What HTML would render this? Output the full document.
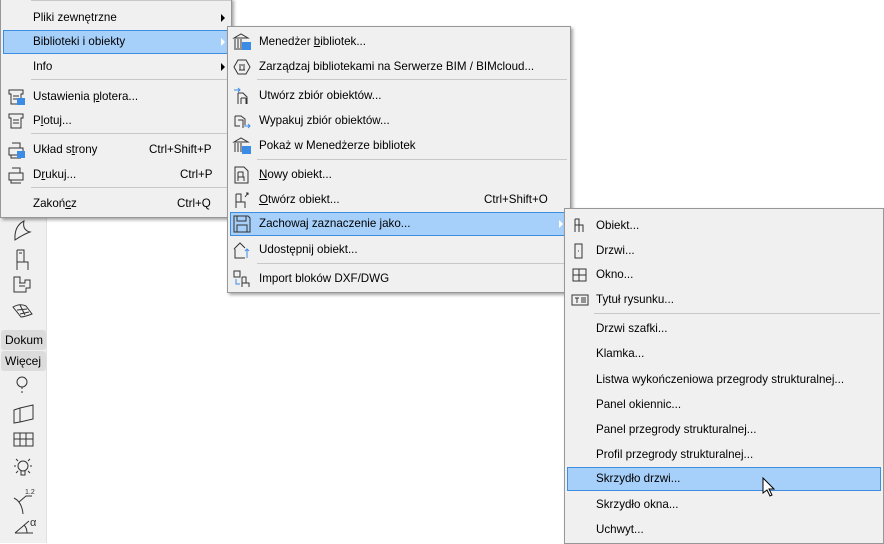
<!DOCTYPE html>
<html><head><meta charset="utf-8"><style>
*{margin:0;padding:0;box-sizing:border-box}
body{width:884px;height:543px;background:#fff;position:relative;overflow:hidden;font-family:"Liberation Sans",sans-serif;font-size:11.6px;color:#000}
.tb{position:absolute;left:0;top:0;width:47px;height:543px;background:#f0f0f0;border-right:1px solid #e0e0e0}
.m{position:absolute;background:#f0f0f0;border:1px solid #979797;box-shadow:2px 2px 3px rgba(0,0,0,.35)}
.i{position:absolute;left:2px;right:2px;height:24px;line-height:24px;white-space:nowrap}
.hl{background:#a6cffa;border:1px solid #3d8ee0;line-height:22px}
.t{position:absolute}
.k{position:absolute}
.ar{position:absolute;width:0;height:0;border-left:4px solid #000;border-top:4px solid transparent;border-bottom:4px solid transparent;top:8px}
.hl .ar{border-left-color:#fff;top:7px}
.s{position:absolute;height:1px;background:#c8c8c8}
.ic{position:absolute;top:3px}
u{text-decoration:underline}
.btn{position:absolute;left:1px;width:45px;height:20px;background:#dcdcdc;border-radius:3px;line-height:20px;padding-left:4px;font-size:12px;overflow:hidden}
svg{overflow:visible}
</style></head><body>
<div class="tb">
<svg class="k" style="left:12px;top:220px" width="22" height="300" fill="none" stroke="#333" stroke-width="1">
<path d="M3 20 Q2 6 12 1 Q10 10 18 12 Q12 14 3 20Z"/>
<path d="M5 30 h7 v12 h4 v8 M5 30 v20 M5 42 h7 M7 33 h3"/>
<path d="M2 57 h6 v6 h5 v-3 h5 v8 h-4 v4 h-12 z M7 63 h6 M7 66 h6"/>
<path d="M1 87 Q8 83 14 86 L20 94 Q12 97 9 97 Q5 92 1 87Z M5 90 L15 89 M8 94 L17 92 M8 85 L13 95"/>
<circle cx="10" cy="162" r="5"/><path d="M10 167 v8" stroke-dasharray="2 2"/>
<path d="M2 190 L8 188 L21 185 L21 199 L8 202 L2 203 Z M8 188 v14"/>
<path d="M2 213 h19 v13 h-19z M2 219 h19 M8 213 v13 M14 213 v13"/>
<circle cx="11" cy="246" r="5"/><path d="M9 251 v4 h4 v-4 M2 246 h2 M18 246 h2 M4 239 l2 2 M18 239 l-2 2 M4 253 l2-2 M18 253 l-2-2"/>
<path d="M2 278 Q10 282 11 294 M7 282 l7-6 h6"/><text x="13" y="274" font-size="7" fill="#333" stroke="none">1.2</text>
<path d="M3 313 L17 301 M3 313 h18 M12 305 q3 3 3 8"/><text x="18" y="306" font-size="11" fill="#333" stroke="none">α</text>
</svg>
<div class="btn" style="top:330px">Dokum</div>
<div class="btn" style="top:351px">Więcej</div>
</div>

<!-- menu 1 -->
<div class="m" style="left:0;top:-2px;width:232px;height:220px">
<div class="s" style="left:30px;right:0;top:1px"></div>
<div class="i" style="top:7px"><span class="t" style="left:30px">Pliki zewnętrzne</span><span class="ar" style="left:218px"></span></div>
<div class="i hl" style="top:31px"><span class="t" style="left:29px">Biblioteki i obiekty</span><span class="ar" style="left:217px"></span></div>
<div class="i" style="top:56px"><span class="t" style="left:30px">Info</span><span class="ar" style="left:218px"></span></div>
<div class="s" style="left:30px;right:2px;top:80px"></div>
<div class="i" style="top:86px"><svg class="ic" style="left:4px" width="18" height="18" fill="none" stroke="#333"><path d="M2 2h14v4h-2v10h-10v-10h-2z M6 8h6 M6 11h6"/><rect x="10" y="10" width="8" height="7" fill="#3c8ce6" stroke="none"/></svg><span class="t" style="left:30px">Ustawienia <u>p</u>lotera...</span></div>
<div class="i" style="top:110px"><svg class="ic" style="left:4px" width="18" height="18" fill="none" stroke="#333"><path d="M2 2h14v4h-2v10h-10v-10h-2z M6 8h6 M6 11h6"/></svg><span class="t" style="left:30px">P<u>l</u>otuj...</span></div>
<div class="s" style="left:30px;right:2px;top:134px"></div>
<div class="i" style="top:139px"><svg class="ic" style="left:4px" width="18" height="18" fill="none" stroke="#333"><path d="M5 2h8v5 M2 7h14v7h-14z M4 14v3h10"/><rect x="10" y="10" width="8" height="7" fill="#3c8ce6" stroke="none"/></svg><span class="t" style="left:30px">Układ s<u>t</u>rony</span><span class="t" style="left:146px">Ctrl+Shift+P</span></div>
<div class="i" style="top:164px"><svg class="ic" style="left:4px" width="18" height="18" fill="none" stroke="#333"><path d="M5 2h8v5 M2 7h14v7h-14z M4 14v3h10"/></svg><span class="t" style="left:30px">D<u>r</u>ukuj...</span><span class="t" style="left:177px">Ctrl+P</span></div>
<div class="s" style="left:30px;right:2px;top:188px"></div>
<div class="i" style="top:193px"><span class="t" style="left:30px">Zakoń<u>c</u>z</span><span class="t" style="left:174px">Ctrl+Q</span></div>
</div>

<!-- menu 2 -->
<div class="m" style="left:227px;top:26px;width:344px;height:267px">
<div class="i" style="top:3px"><svg class="ic" style="left:3px" width="18" height="18" fill="none" stroke="#333"><path d="M1 5L8 1L15 5z M2 6v9 M5 6v9 M8 6v9 M1 16h10"/><rect x="9" y="9" width="9" height="8" fill="#3c8ce6" stroke="none"/></svg><span class="t" style="left:29px">Menedżer <u>b</u>ibliotek...</span></div>
<div class="i" style="top:28px"><svg class="ic" style="left:3px" width="18" height="18" fill="none" stroke="#333"><path d="M5 2h8l4 7-4 7h-8l-4-7z M6 7h6 M7 8v4 M11 8v4 M6 12h6"/></svg><span class="t" style="left:29px">Zarządzaj bibliotekami na Serwerze BIM / BIMcloud...</span></div>
<div class="s" style="left:29px;right:3px;top:52px"></div>
<div class="i" style="top:57px"><svg class="ic" style="left:3px" width="18" height="18" fill="none" stroke="#333"><path d="M5 6v11 M5 6h5l4 4v7 M8 11h5 M8 11v6 M13 11v6"/><path d="M1 3h6 M5 1l2 2-2 2" stroke="#3c8ce6"/></svg><span class="t" style="left:29px">Utwórz zbiór obiektów...</span></div>
<div class="i" style="top:82px"><svg class="ic" style="left:3px" width="18" height="18" fill="none" stroke="#333"><path d="M2 4h6l4 3v6 M2 4v10h5 M5 8h5v8"/><path d="M11 14h6 M15 12l2 2-2 2" stroke="#3c8ce6"/></svg><span class="t" style="left:29px">Wypakuj zbiór obiektów...</span></div>
<div class="i" style="top:107px"><svg class="ic" style="left:3px" width="18" height="18" fill="none" stroke="#333"><path d="M1 5L8 1L15 5z M2 6v9 M5 6v9 M8 6v9"/><rect x="9" y="9" width="9" height="8" fill="#3c8ce6" stroke="none"/></svg><span class="t" style="left:29px">Pokaż w Menedżerze bibliotek</span></div>
<div class="s" style="left:29px;right:3px;top:132px"></div>
<div class="i" style="top:136px"><svg class="ic" style="left:3px" width="18" height="18" fill="none" stroke="#333"><path d="M2 1h9l4 4v12h-13z M5 6h5v5 M5 6v9 M5 11h6v4"/></svg><span class="t" style="left:29px"><u>N</u>owy obiekt...</span></div>
<div class="i" style="top:161px"><svg class="ic" style="left:3px" width="18" height="18" fill="none" stroke="#333"><path d="M3 3h5v8h4v6 M3 3v14 M3 11h5"/><path d="M12 6l3-4 M13 2h2v2" stroke="#333"/></svg><span class="t" style="left:29px"><u>O</u>twórz obiekt...</span><span class="t" style="left:254px">Ctrl+Shift+O</span></div>
<div class="i hl" style="top:185px"><svg class="ic" style="left:2px;top:2px" width="18" height="18" fill="none" stroke="#333"><path d="M1 1h14l2 2v14h-16z M4 1v5h9v-5 M4 17v-7h10v7"/></svg><span class="t" style="left:28px">Zachowaj zaznaczenie jako...</span><span class="ar" style="left:328px"></span></div>
<div class="i" style="top:211px"><svg class="ic" style="left:3px" width="18" height="18" fill="none" stroke="#333"><path d="M1 8l6-6 5 5 M2 8v9h10"/><path d="M14 17v-9 M12 10l2-2 2 2" stroke="#3c8ce6"/></svg><span class="t" style="left:29px">Udostępnij obiekt...</span></div>
<div class="s" style="left:29px;right:3px;top:236px"></div>
<div class="i" style="top:240px"><svg class="ic" style="left:3px" width="18" height="18" fill="none" stroke="#333"><rect x="1" y="1" width="6" height="6"/><path d="M9 7h4v6h3v4 M9 7v10 M9 13h4"/><path d="M3 9v5h4" stroke="#3c8ce6"/></svg><span class="t" style="left:29px">Import bloków DXF/DWG</span></div>
</div>

<!-- menu 3 -->
<div class="m" style="left:564px;top:208px;width:320px;height:336px">
<div class="i" style="top:5px"><svg class="ic" style="left:5px" width="16" height="18" fill="none" stroke="#333"><path d="M3 2h4v6h4v7 M3 2v13 M3 8h4 M7 8v7"/></svg><span class="t" style="left:29px">Obiekt...</span></div>
<div class="i" style="top:30px"><svg class="ic" style="left:5px" width="16" height="18" fill="none" stroke="#333"><path d="M3 2h7v14h-7z M6 9h1"/></svg><span class="t" style="left:29px">Drzwi...</span></div>
<div class="i" style="top:54px"><svg class="ic" style="left:4px" width="16" height="18" fill="none" stroke="#333"><path d="M2 3h13v12h-13z M2 9h13 M8 3v12"/></svg><span class="t" style="left:29px">Okno...</span></div>
<div class="i" style="top:79px"><svg class="ic" style="left:4px" width="18" height="18" fill="none" stroke="#333"><path d="M1 4h16v10h-16z M4 7h4 M6 7v5 M10 7h5 M10 9h5 M10 11h5"/></svg><span class="t" style="left:29px">Tytuł rysunku...</span></div>
<div class="s" style="left:29px;right:3px;top:104px"></div>
<div class="i" style="top:108px"><span class="t" style="left:29px">Drzwi szafki...</span></div>
<div class="i" style="top:133px"><span class="t" style="left:29px">Klamka...</span></div>
<div class="i" style="top:159px"><span class="t" style="left:29px">Listwa wykończeniowa przegrody strukturalnej...</span></div>
<div class="i" style="top:184px"><span class="t" style="left:29px">Panel okiennic...</span></div>
<div class="i" style="top:209px"><span class="t" style="left:29px">Panel przegrody strukturalnej...</span></div>
<div class="i" style="top:234px"><span class="t" style="left:29px">Profil przegrody strukturalnej...</span></div>
<div class="i hl" style="top:258px"><span class="t" style="left:28px">Skrzydło drzwi...</span></div>
<div class="i" style="top:284px"><span class="t" style="left:29px">Skrzydło okna...</span></div>
<div class="i" style="top:309px"><span class="t" style="left:29px">Uchwyt...</span></div>
</div>
<svg style="position:absolute;left:762px;top:477px" width="14" height="20"><path d="M1 1v15l4-3 3 6 2-1-3-6h5z" fill="#fff" stroke="#000"/></svg>
</body></html>
